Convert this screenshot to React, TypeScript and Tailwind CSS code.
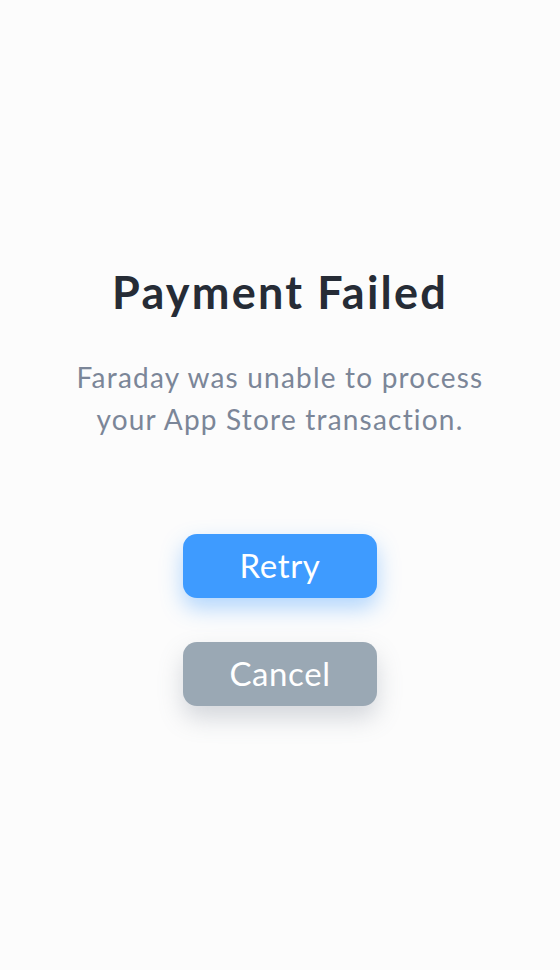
export default function App() {
  return (
    <main
      className="flex min-h-[970px] w-full flex-col items-center bg-[#fcfcfc] pt-[264px]"
      style={{ fontFamily: "Lato, 'Open Sans', sans-serif" }}
    >
      <h1 className="text-[45px] font-bold leading-[56px] tracking-[2.2px] text-[#262c36]">
        Payment Failed
      </h1>
      <p className="mt-[36px] text-center text-[28px] leading-[42px] tracking-[1.2px] text-[#7b8698]">
        Faraday was unable to process
        <br />
        your App Store transaction.
      </p>
      <div className="mt-[94px] flex flex-col gap-[44px]">
        <button className="flex h-[64px] w-[194px] items-center justify-center rounded-[14px] bg-[#3e9bff] text-[33px] tracking-[0.6px] text-white shadow-[0_10px_22px_rgba(62,155,255,0.4)]">
          Retry
        </button>
        <button className="flex h-[64px] w-[194px] items-center justify-center rounded-[14px] bg-[#9aa8b4] text-[33px] tracking-[0.6px] text-white shadow-[0_12px_24px_rgba(120,130,145,0.3)]">
          Cancel
        </button>
      </div>
    </main>
  );
}
